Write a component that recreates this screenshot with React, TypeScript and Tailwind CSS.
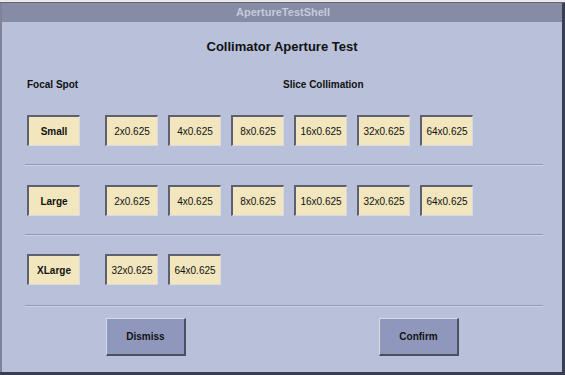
import React from "react"

const font = { fontFamily: '"Liberation Sans", Arial, sans-serif' }

const rows = [
  { spot: "Small", slices: ["2x0.625", "4x0.625", "8x0.625", "16x0.625", "32x0.625", "64x0.625"] },
  { spot: "Large", slices: ["2x0.625", "4x0.625", "8x0.625", "16x0.625", "32x0.625", "64x0.625"] },
  { spot: "XLarge", slices: ["32x0.625", "64x0.625"] },
]

function Toggle({ label, bold }: { label: string; bold?: boolean }) {
  return (
    <button
      className={`w-[53px] h-[31px] bg-[#f1e6bd] border-t-2 border-l-2 border-r border-b border-t-[#5e6070] border-l-[#5e6070] border-r-[#d8d9e2] border-b-[#d8d9e2] text-[10px] text-[#111] flex items-center justify-center ${bold ? "font-bold" : ""}`}
    >
      {label}
    </button>
  )
}

function Divider() {
  return (
    <div className="ml-[23px] w-[518px] h-[2px] border-t border-t-[#9299b3] border-b border-b-[#cdd2e4]" />
  )
}

function ActionButton({ label }: { label: string }) {
  return (
    <button className="w-[80px] h-[38px] bg-[#8f98bc] border-t border-l border-t-[#d6dae8] border-l-[#d6dae8] border-r-2 border-b-2 border-r-[#4a4f64] border-b-[#4a4f64] text-[10px] font-bold text-[#111] flex items-center justify-center">
      {label}
    </button>
  )
}

export default function App() {
  return (
    <div className="w-[565px] h-[375px] bg-[#3a3e52] flex flex-col overflow-hidden" style={font}>
      {/* top strip */}
      <div className="h-[3px] bg-[#e8e8ee] border-b border-b-[#666]" />

      <div className="flex-1 flex flex-col border-l-2 border-l-[#7e8398] mr-[3px] mb-[3px]">
        {/* title bar */}
        <div className="h-[19px] bg-[#868ca4] flex items-center justify-center text-[11px] font-bold text-[#c6cadd] pl-[2px]">
          ApertureTestShell
        </div>

        {/* content */}
        <div className="flex-1 bg-[#b8c0da] flex flex-col">
          <div className="mt-[17px] h-[16px] flex items-center justify-center text-[13px] font-bold text-[#111]">
            Collimator Aperture Test
          </div>

          <div className="mt-[23px] h-[12px] flex items-center text-[10px] font-bold text-[#111]">
            <span className="ml-[25px] w-[256px]">Focal Spot</span>
            <span>Slice Collimation</span>
          </div>

          {rows.map((row, i) => (
            <div key={row.spot} className="flex flex-col">
              <div className={`${i === 0 ? "mt-[25px]" : i === 1 ? "mt-[19px]" : "mt-[18px]"} ml-[25px] flex items-center`}>
                <Toggle label={row.spot} bold />
                <div className="ml-[25px] flex gap-[10px]">
                  {row.slices.map((s) => (
                    <Toggle key={s} label={s} />
                  ))}
                </div>
              </div>
              <div className={i === 2 ? "mt-[20px]" : "mt-[18px]"}>
                <Divider />
              </div>
            </div>
          ))}

          <div className="mt-[11px] flex">
            <div className="ml-[104px]">
              <ActionButton label="Dismiss" />
            </div>
            <div className="ml-[193px]">
              <ActionButton label="Confirm" />
            </div>
          </div>
        </div>
      </div>
    </div>
  )
}
